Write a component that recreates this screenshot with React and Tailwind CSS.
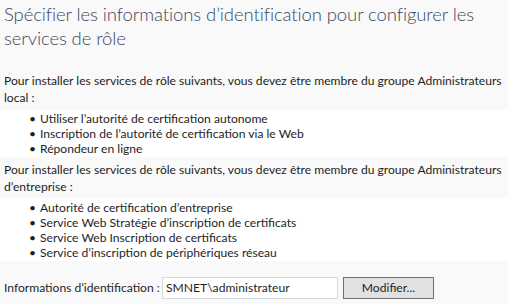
export default function App() {
  const local = [
    "Utiliser l’autorité de certification autonome",
    "Inscription de l’autorité de certification via le Web",
    "Répondeur en ligne",
  ];
  const entreprise = [
    "Autorité de certification d’entreprise",
    "Service Web Stratégie d’inscription de certificats",
    "Service Web Inscription de certificats",
    "Service d’inscription de périphériques réseau",
  ];

  return (
    <div className="w-[508px] h-[304px] overflow-hidden bg-[#f9f9f9] text-[#1e1e1e] font-['Lato',sans-serif] text-[12.1px]">
      <h1 className="px-[4px] pt-[2px] text-[18.5px] leading-[24px] font-light text-[#3a4860] tracking-[-0.1px] whitespace-nowrap">
        Spécifier les informations d’identification pour configurer les
        <br />
        services de rôle
      </h1>

      <p className="mt-[22px] px-[4px] leading-[17px] whitespace-nowrap">
        Pour installer les services de rôle suivants, vous devez être membre du groupe Administrateurs
        <br />
        local :
      </p>
      <ul className="mt-[4px] bg-white py-[1px] pl-[40px] leading-[15px]">
        {local.map((s) => (
          <li key={s} className="relative">
            <span className="absolute left-[-11px]">•</span>
            {s}
          </li>
        ))}
      </ul>

      <p className="mt-[4px] px-[4px] leading-[17px] whitespace-nowrap">
        Pour installer les services de rôle suivants, vous devez être membre du groupe Administrateurs
        <br />
        d’entreprise :
      </p>
      <ul className="mt-[3px] bg-white py-[1.5px] pl-[40px] leading-[15px]">
        {entreprise.map((s) => (
          <li key={s} className="relative">
            <span className="absolute left-[-11px]">•</span>
            {s}
          </li>
        ))}
      </ul>

      <div className="mt-[16px] flex items-center px-[4px]">
        <span className="w-[158px] whitespace-nowrap">Informations d’identification :</span>
        <div className="w-[176px] h-[22px] border border-[#d5d9e0] bg-white flex items-center px-[3px]">
          SMNET\administrateur
        </div>
        <button className="ml-[5px] w-[91px] h-[22px] border border-[#707070] bg-[#e1e1e1] text-center">
          Modifier...
        </button>
      </div>
    </div>
  );
}
